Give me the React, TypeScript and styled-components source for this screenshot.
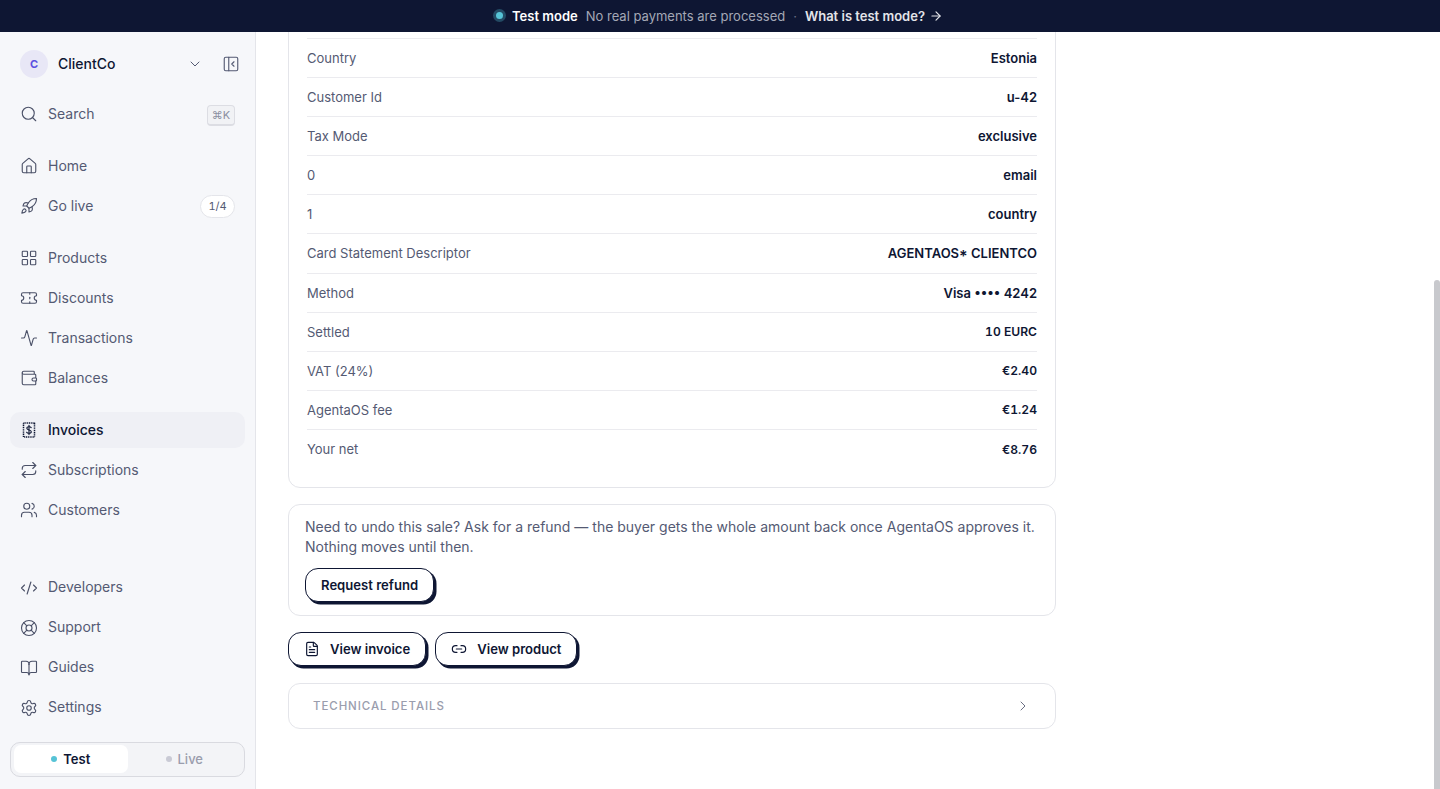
import React from "react";
import styled, { createGlobalStyle } from "styled-components";
import {
  Activity,
  ArrowRight,
  BookOpen,
  ChevronDown,
  ChevronRight,
  CodeXml,
  FileText,
  House,
  LayoutGrid,
  LifeBuoy,
  Link2,
  PanelLeftClose,
  Repeat,
  Rocket,
  Search,
  Settings,
  Ticket,
  Users,
  Wallet,
} from "lucide-react";

const InvoiceIcon = () => (
  <svg width="18" height="18" viewBox="0 0 18 18" fill="none" stroke="currentColor" strokeLinecap="round" strokeLinejoin="round">
    <path d="M3.5 2h11v14h-11z" strokeWidth="1.5" strokeDasharray="1.1 0.7" strokeLinecap="butt" />
    <path d="M11.2 6.6c-.4-.6-1.2-.9-2.2-.9-1.2 0-2.2.5-2.2 1.6 0 2.2 4.5 1.1 4.5 3.4 0 1-1 1.6-2.3 1.6-1.1 0-2-.3-2.4-1" strokeWidth="1.1" />
    <path d="M9 4.4v9.2" strokeWidth="1.1" />
  </svg>
);

const topNav = [
  { label: "Home", icon: <House size={18} strokeWidth={1.5} /> },
  { label: "Go live", icon: <Rocket size={18} strokeWidth={1.5} />, badge: "1/4" },
];
const moneyNav = [
  { label: "Products", icon: <LayoutGrid size={18} strokeWidth={1.5} /> },
  { label: "Discounts", icon: <Ticket size={18} strokeWidth={1.5} /> },
  { label: "Transactions", icon: <Activity size={18} strokeWidth={1.5} /> },
  { label: "Balances", icon: <Wallet size={18} strokeWidth={1.5} /> },
];
const salesNav = [
  { label: "Invoices", icon: <InvoiceIcon />, active: true },
  { label: "Subscriptions", icon: <Repeat size={18} strokeWidth={1.5} /> },
  { label: "Customers", icon: <Users size={18} strokeWidth={1.5} /> },
];
const bottomNav = [
  { label: "Developers", icon: <CodeXml size={18} strokeWidth={1.5} /> },
  { label: "Support", icon: <LifeBuoy size={18} strokeWidth={1.5} /> },
  { label: "Guides", icon: <BookOpen size={18} strokeWidth={1.5} /> },
  { label: "Settings", icon: <Settings size={18} strokeWidth={1.5} /> },
];

const rows = [
  { label: "Country", value: "Estonia" },
  { label: "Customer Id", value: "u-42" },
  { label: "Tax Mode", value: "exclusive" },
  { label: "0", value: "email" },
  { label: "1", value: "country" },
  { label: "Card Statement Descriptor", value: "AGENTAOS* CLIENTCO", caps: true },
  { label: "Method", value: "Visa •••• 4242" },
  { label: "Settled", value: "10 EURC", mono: true },
  { label: "VAT (24%)", value: "€2.40", mono: true },
  { label: "AgentaOS fee", value: "€1.24", mono: true },
  { label: "Your net", value: "€8.76", mono: true },
];

type NavEntry = { label: string; icon: React.ReactNode; badge?: string; active?: boolean };

const NavList = ({ items }: { items: NavEntry[] }) => (
  <NavGroup>
    {items.map((item) => (
      <NavItem key={item.label} $active={item.active}>
        <NavIcon $active={item.active}>{item.icon}</NavIcon>
        <NavText>{item.label}</NavText>
        {item.badge && <Badge>{item.badge}</Badge>}
      </NavItem>
    ))}
  </NavGroup>
);

const App = () => {
  return (
    <>
      <GlobalStyle />
      <Page>
        <Banner>
          <BannerDot />
          <BannerStrong>Test mode</BannerStrong>
          <BannerMuted>No real payments are processed</BannerMuted>
          <BannerSep>·</BannerSep>
          <BannerLink>
            What is test mode? <ArrowRight size={14} strokeWidth={2} />
          </BannerLink>
        </Banner>
        <Body>
          <Sidebar>
            <OrgRow>
              <Avatar>C</Avatar>
              <OrgName>ClientCo</OrgName>
              <ChevronDown size={16} strokeWidth={1.5} color="#545a73" />
              <PanelButton>
                <PanelLeftClose size={18} strokeWidth={1.5} />
              </PanelButton>
            </OrgRow>
            <SearchRow>
              <NavIcon>
                <Search size={18} strokeWidth={1.5} />
              </NavIcon>
              <NavText>Search</NavText>
              <Kbd>⌘K</Kbd>
            </SearchRow>
            <NavList items={topNav} />
            <NavList items={moneyNav} />
            <NavList items={salesNav} />
            <BottomNav>
              <NavList items={bottomNav} />
            </BottomNav>
            <ModeSwitch>
              <ModeOption $active>
                <ModeDot $active />
                Test
              </ModeOption>
              <ModeOption>
                <ModeDot />
                Live
              </ModeOption>
            </ModeSwitch>
          </Sidebar>
          <Main>
            <Column>
              <Card $pad="0 18px 18px">
                <Row />
                {rows.map((row) => (
                  <Row key={row.label}>
                    <RowLabel>{row.label}</RowLabel>
                    <RowValue $mono={row.mono} $caps={row.caps}>
                      {row.value}
                    </RowValue>
                  </Row>
                ))}
              </Card>
              <Card $pad="12px 16px 13px">
                <RefundText>
                  Need to undo this sale? Ask for a refund — the buyer gets the whole amount back once AgentaOS approves it.
                  Nothing moves until then.
                </RefundText>
                <ActionButton>Request refund</ActionButton>
              </Card>
              <ButtonRow>
                <ActionButton>
                  <FileText size={16} strokeWidth={1.75} />
                  View invoice
                </ActionButton>
                <ActionButton>
                  <Link2 size={16} strokeWidth={1.75} />
                  View product
                </ActionButton>
              </ButtonRow>
              <DetailsCard>
                <DetailsTitle>Technical details</DetailsTitle>
                <ChevronRight size={16} strokeWidth={1.5} color="#6b7084" />
              </DetailsCard>
            </Column>
            <ScrollThumb />
          </Main>
        </Body>
      </Page>
    </>
  );
};

export default App;

const GlobalStyle = createGlobalStyle`
  html, body {
    margin: 0;
    height: 100%;
    overflow: hidden;
  }
  body {
    font-family: Inter, "Liberation Sans", sans-serif;
    color: #0e1633;
    background: #fff;
  }
  * {
    box-sizing: border-box;
  }
`;
const Page = styled.div`
  display: flex;
  flex-direction: column;
  height: 789px;
`;
const Banner = styled.div`
  height: 32px;
  flex: none;
  display: flex;
  align-items: center;
  justify-content: center;
  padding: 0 4px 1px 0;
  background: #0e1633;
  font-size: 13px;
`;
const BannerDot = styled.span`
  width: 7px;
  height: 7px;
  margin: 0 9px 0 3px;
  border-radius: 50%;
  background: #56c3d6;
  box-shadow: 0 0 0 3px rgba(86, 195, 214, 0.3);
`;
const BannerStrong = styled.span`
  color: #fff;
  font-weight: 600;
  margin-right: 8px;
`;
const BannerMuted = styled.span`
  color: #a4a8b6;
`;
const BannerSep = styled.span`
  color: #6a7085;
  margin: 0 8px;
`;
const BannerLink = styled.span`
  display: flex;
  align-items: center;
  gap: 4px;
  color: #e3e4e9;
  font-weight: 600;
`;
const Body = styled.div`
  flex: 1;
  display: flex;
  min-height: 0;
`;
const Sidebar = styled.aside`
  width: 256px;
  flex: none;
  display: flex;
  flex-direction: column;
  padding: 18px 10px 12px;
  background: #f6f7fa;
  border-right: 1px solid #e4e5ea;
`;
const OrgRow = styled.div`
  display: flex;
  align-items: center;
  height: 28px;
  padding: 0 5px 0 10px;
`;
const Avatar = styled.div`
  width: 28px;
  height: 28px;
  display: flex;
  align-items: center;
  justify-content: center;
  border-radius: 50%;
  background: #e8e7f6;
  color: #5b50e0;
  font-size: 11px;
  font-weight: 700;
`;
const OrgName = styled.div`
  flex: 1;
  margin: 0 0 2px 10px;
  font-size: 14px;
  font-weight: 500;
`;
const PanelButton = styled.div`
  display: flex;
  margin-left: 19px;
  color: #545a73;
`;
const SearchRow = styled.div`
  display: flex;
  align-items: center;
  gap: 10px;
  height: 36px;
  margin: 18px 0 16px;
  padding: 0 10px;
  font-size: 14px;
  color: #545a73;
`;
const Kbd = styled.span`
  margin: 2px 0 0 auto;
  height: 21px;
  width: 28px;
  display: flex;
  align-items: center;
  justify-content: center;
  border: 1px solid #dcdde3;
  border-bottom-width: 2px;
  border-radius: 4px;
  background: #f1f2f5;
  color: #8b8fa1;
  font-size: 11px;
`;
const NavGroup = styled.nav`
  display: flex;
  flex-direction: column;
  gap: 4px;
  margin-bottom: 16px;
`;
const BottomNav = styled.div`
  margin-top: auto;
  margin-bottom: 0.5px;
`;
const NavItem = styled.div<{ $active?: boolean }>`
  display: flex;
  align-items: center;
  gap: 10px;
  height: 36px;
  padding: 0 10px;
  border-radius: 10px;
  font-size: 14px;
  font-weight: ${({ $active }) => ($active ? 500 : 400)};
  color: ${({ $active }) => ($active ? "#0e1633" : "#545a73")};
  background: ${({ $active }) => ($active ? "#eff0f5" : "transparent")};
`;
const NavIcon = styled.span<{ $active?: boolean }>`
  display: flex;
  color: ${({ $active }) => ($active ? "#0e1633" : "#4b5168")};
`;
const NavText = styled.span`
  margin-bottom: 2px;
`;
const Badge = styled.span`
  margin-left: auto;
  width: 35px;
  height: 23px;
  display: flex;
  align-items: center;
  justify-content: center;
  border: 1px solid #e4e5ea;
  border-radius: 12px;
  background: #fff;
  color: #545a73;
  font-size: 11px;
  font-variant-numeric: tabular-nums;
`;
const ModeSwitch = styled.div`
  height: 35px;
  flex: none;
  display: flex;
  padding: 2px 3px 3px;
  border: 1px solid #d9dae0;
  border-radius: 10px;
  background: #f3f4f7;
`;
const ModeOption = styled.div<{ $active?: boolean }>`
  flex: 1;
  display: flex;
  align-items: center;
  justify-content: center;
  gap: 6px;
  border-radius: 7px;
  font-size: 13px;
  font-weight: ${({ $active }) => ($active ? 600 : 500)};
  color: ${({ $active }) => ($active ? "#0e1633" : "#9a9dad")};
  background: ${({ $active }) => ($active ? "#fff" : "transparent")};
`;
const ModeDot = styled.span<{ $active?: boolean }>`
  width: 6px;
  height: 6px;
  border-radius: 50%;
  background: ${({ $active }) => ($active ? "#56c3d6" : "#c9cad5")};
`;
const Main = styled.main`
  position: relative;
  flex: 1;
  display: flex;
  flex-direction: column;
  justify-content: flex-end;
  overflow: hidden;
  padding: 0 0 60px 32px;
`;
const Column = styled.div`
  width: 768px;
  display: flex;
  flex-direction: column;
  gap: 16px;
`;
const Card = styled.section<{ $pad: string }>`
  padding: ${({ $pad }) => $pad};
  border: 1px solid #e4e5ea;
  border-radius: 12px;
  background: #fff;
`;
const Row = styled.div`
  height: 39.1px;
  display: flex;
  align-items: center;
  justify-content: space-between;
  font-size: 13px;
  border-bottom: 1px solid #ebebef;
  &:last-child {
    border-bottom: 0;
  }
`;
const RowLabel = styled.span`
  color: #545a73;
`;
const RowValue = styled.span<{ $mono?: boolean; $caps?: boolean }>`
  font-weight: 600;
  font-size: ${({ $mono }) => ($mono ? "12.1px" : "13px")};
  font-variant-numeric: ${({ $mono }) => ($mono ? "tabular-nums" : "normal")};
  font-feature-settings: ${({ $caps }) => ($caps ? '"case"' : "normal")};
`;
const RefundText = styled.p`
  margin: 0 0 11px;
  font-size: 14px;
  line-height: 20px;
  color: #545a73;
`;
const ActionButton = styled.button`
  display: inline-flex;
  align-items: center;
  gap: 10px;
  height: 34px;
  padding: 0 14.5px 0 15px;
  border: 1.5px solid #0e1633;
  border-radius: 13px;
  background: #fff;
  box-shadow: 2.5px 2.5px 0 #0e1633;
  color: #0e1633;
  font-family: inherit;
  font-size: 13.1px;
  font-weight: 600;
`;
const ButtonRow = styled.div`
  display: flex;
  gap: 9.5px;
  margin-bottom: 1px;
`;
const DetailsCard = styled.div`
  height: 46px;
  display: flex;
  align-items: center;
  justify-content: space-between;
  padding: 0 24px 1px;
  border: 1px solid #e4e5ea;
  border-radius: 12px;
`;
const DetailsTitle = styled.span`
  font-size: 11.5px;
  font-weight: 500;
  letter-spacing: 0.08em;
  text-transform: uppercase;
  color: #9a9dad;
`;
const ScrollThumb = styled.div`
  position: absolute;
  top: 248px;
  right: 0;
  width: 6px;
  height: 520px;
  border-radius: 3px;
  background: #c8c9cd;
`;
